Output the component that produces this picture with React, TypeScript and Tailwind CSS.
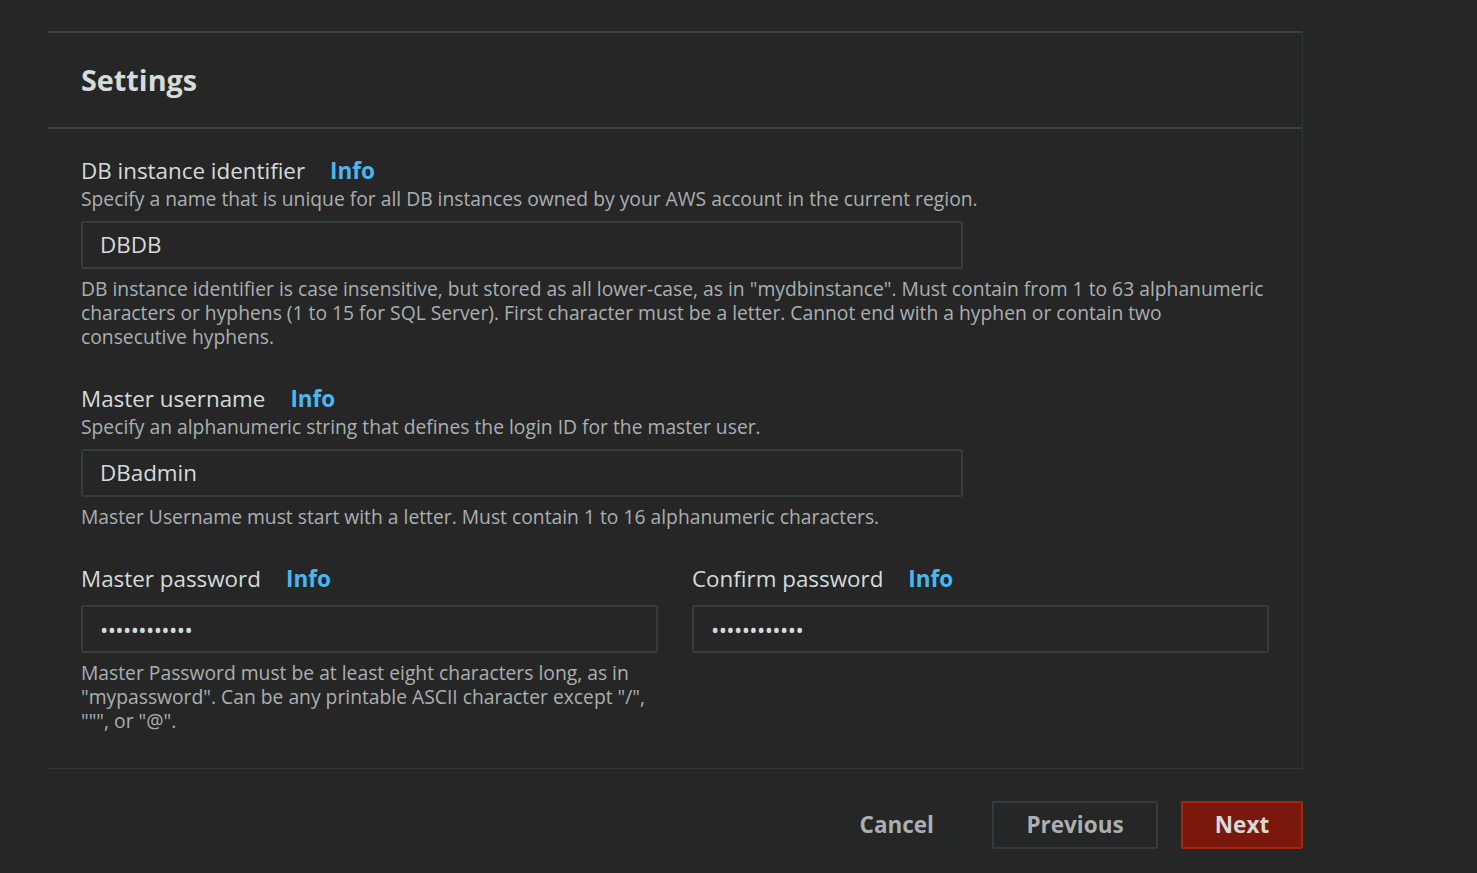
const font = { fontFamily: '"Open Sans", "Noto Sans", sans-serif' };

type FieldProps = {
  label: string;
  description?: string;
  value: string;
  password?: boolean;
  hint?: React.ReactNode;
  inputWidth?: string;
};

const Field = ({ label, description, value, password, hint, inputWidth = "w-full" }: FieldProps) => (
  <div className="flex flex-col">
    <div className="flex items-center gap-[25px] h-[28px]">
      <span className="text-[22.4px] text-[#d5dbdb]">{label}</span>
      <a className="text-[22.5px] font-bold text-[#44b9f6]">Info</a>
    </div>
    {description ? (
      <p className="text-[19.3px] leading-[28px] text-[#a9b0b2]">{description}</p>
    ) : (
      <div className="h-[4px]" />
    )}
    <div
      className={`mt-[8px] h-[48px] border-2 border-[#353c3c] rounded-[2px] flex items-center px-[17px] text-[#d5dbdb] ${inputWidth} ${
        password ? "text-[22px] tracking-[-0.6px]" : "text-[22.4px]"
      }`}
    >
      {value}
    </div>
    {hint && (
      <p className="mt-[8px] text-[19.3px] leading-[24px] text-[#a9b0b2]">{hint}</p>
    )}
  </div>
);

export default function App() {
  return (
    <div className="min-h-screen bg-[#252626] pt-[31px] pl-[48px]" style={font}>
      <div className="w-[1255px] bg-[#262626] border-t-2 border-r border-b border-[#323637] border-t-[#3b3f40]">
        <div className="h-[96px] px-[33px] flex items-center border-b-2 border-[#3b3f40]">
          <h2 className="text-[28.8px] font-bold text-[#d5dbdb]">Settings</h2>
        </div>
        <div className="px-[33px] pt-[28px] pb-[35px] flex flex-col gap-[36px]">
          <Field
            label="DB instance identifier"
            description="Specify a name that is unique for all DB instances owned by your AWS account in the current region."
            value="DBDB"
            inputWidth="w-[882px]"
            hint='DB instance identifier is case insensitive, but stored as all lower-case, as in "mydbinstance". Must contain from 1 to 63 alphanumeric characters or hyphens (1 to 15 for SQL Server). First character must be a letter. Cannot end with a hyphen or contain two consecutive hyphens.'
          />
          <Field
            label="Master username"
            description="Specify an alphanumeric string that defines the login ID for the master user."
            value="DBadmin"
            inputWidth="w-[882px]"
            hint="Master Username must start with a letter. Must contain 1 to 16 alphanumeric characters."
          />
          <div className="grid grid-cols-2 gap-[34px] w-[1188px]">
            <Field
              label="Master password"
              value="••••••••••••"
              password
              hint={<>Master Password must be at least eight characters long, as in "mypassword". Can be any printable ASCII character except "/", """, or "@".</>}
            />
            <Field label="Confirm password" value="••••••••••••" password />
          </div>
        </div>
      </div>
      <div className="w-[1255px] flex justify-end items-center gap-[23px] mt-[32px]">
        <button className="mr-[35px] h-[48px] text-[22.5px] font-bold text-[#a9b0b2]">Cancel</button>
        <button className="w-[166px] h-[48px] border-2 border-[#333a41] rounded-[2px] text-[22.5px] font-bold text-[#a9b0b2]">
          Previous
        </button>
        <button className="w-[122px] h-[48px] border-2 border-[#a4270f] bg-[#7a180c] rounded-[2px] text-[22.5px] font-bold text-[#d5dbdb]">
          Next
        </button>
      </div>
    </div>
  );
}
